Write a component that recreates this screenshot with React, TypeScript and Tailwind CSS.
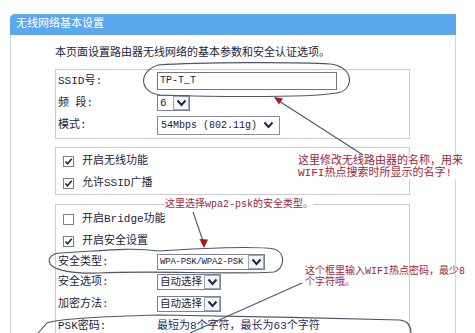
import React from 'react'

const cjk = "font-['Liberation_Mono','Noto_Sans_CJK_SC',monospace]"

const Chevron = () => (
  <svg width="11" height="8" viewBox="0 0 11 8">
    <path d="M1.5 1.5 L5.5 6 L9.5 1.5" fill="none" stroke="#1c2648" strokeWidth="2" />
  </svg>
)

const Select = ({ value, width, text = 'text-[11px]' }: { value: string; width: string; text?: string }) => (
  <div className={`flex h-[16px] items-stretch border border-[#7b8190] bg-white ${width}`}>
    <span className={`flex-1 overflow-hidden whitespace-nowrap pl-[2px] leading-[14px] ${text}`}>{value}</span>
    <span className="flex w-[16px] shrink-0 items-center justify-center border border-[#9aa6bb] bg-[#f4f6fa]">
      <Chevron />
    </span>
  </div>
)

const Check = ({ checked }: { checked?: boolean }) => (
  <span className="flex h-[11px] w-[11px] items-center justify-center border border-[#7a7f88] bg-white">
    {checked && (
      <svg width="9" height="9" viewBox="0 0 9 9">
        <path d="M1.5 4.5 L3.5 6.8 L7.8 1.8" fill="none" stroke="#20283c" strokeWidth="1.6" />
      </svg>
    )}
  </span>
)

const Row = ({ label, h, children }: { label: string; h: string; children: React.ReactNode }) => (
  <div className={`flex items-center pl-[2px] ${h}`}>
    <span className="w-[99px] text-[11px] leading-[14px]">{label}</span>
    {children}
  </div>
)

const CheckRow = ({ label, checked }: { label: string; checked?: boolean }) => (
  <div className="flex h-[22px] items-center gap-[8px] pl-[7px]">
    <Check checked={checked} />
    <span className="text-[11px] leading-[14px]">{label}</span>
  </div>
)

export default function App() {
  return (
    <div className={`relative h-[333px] w-[475px] overflow-hidden bg-white text-[#1d2440] ${cjk}`}>
      {/* page panel */}
      <div className="ml-[10px] w-[446px] pt-[14px]">
        <div className="h-[21px] rounded-tl-[5px] bg-[#5ba8ee] pl-[6px] text-[11px] leading-[21px] text-white">
          无线网络基本设置
        </div>
        <div className="h-[300px] border-x border-[#d3d6da] pl-[44px]">
          <p className="pt-[11px] text-[11px] leading-[14px]">本页面设置路由器无线网络的基本参数和安全认证选项。</p>

          {/* group 1 */}
          <div className="mt-[9px] w-[355px] border border-[#c9ccd1] pb-[1px]">
            <Row label="SSID号:" h="h-[22px]">
              <div className="h-[18px] w-[180px] border border-[#6e7480] pl-[2px] text-[10px] leading-[16px]">TP-T_T</div>
            </Row>
            <Row label="频  段:" h="h-[21px]">
              <Select value="6" width="w-[33px]" />
            </Row>
            <Row label="模式:" h="h-[24px]">
              <div className="flex h-[19px] w-[123px] items-center gap-[6px] border border-[#8a909b] pl-[3px] text-[10px]">
                <span>54Mbps (802.11g)</span>
                <Chevron />
              </div>
            </Row>
          </div>

          {/* group 2 */}
          <div className="mt-[8px] w-[355px] border border-[#c9ccd1] pt-[2px]">
            <CheckRow label="开启无线功能" checked />
            <CheckRow label="允许SSID广播" checked />
          </div>

          {/* group 3 */}
          <div className="mt-[9px] h-[200px] w-[355px] border border-[#c9ccd1] pt-[3px]">
            <CheckRow label="开启Bridge功能" />
            <CheckRow label="开启安全设置" checked />
            <Row label="安全类型:" h="h-[19px]">
              <Select value="WPA-PSK/WPA2-PSK" width="w-[108px]" text="text-[9px] tracking-[-0.2px]" />
            </Row>
            <Row label="安全选项:" h="h-[22px]">
              <Select value="自动选择" width="w-[64px]" text="text-[10.5px]" />
            </Row>
            <Row label="加密方法:" h="h-[22px]">
              <Select value="自动选择" width="w-[64px]" text="text-[10.5px]" />
            </Row>
            <Row label="PSK密码:" h="h-[22px]">
              <span className="text-[11px] leading-[14px] text-[#1f2a5a]">最短为8个字符，最长为63个字符</span>
            </Row>
          </div>
        </div>
      </div>

      {/* hand-drawn notes */}
      <svg className="pointer-events-none absolute left-0 top-0" width="475" height="333" viewBox="0 0 475 333">
        <g fill="none" stroke="#4d5566" strokeWidth="1.1">
          <path d="M158 65 C200 62 300 62 330 64 C352 66 355 86 341 92 C320 98 220 97 160 95 C140 93 137 72 158 65" />
          <path d="M363 155 L279 101" />
          <path d="M193 212 L203 241" />
          <path d="M158 251 C200 248 258 246 274 249 C286 252 285 269 274 272 C230 275 150 270 100 273 C70 274 58 270 52 266 C46 260 50 254 60 253 C100 251 130 247 158 251" />
          <path d="M302 283 L190 333" />
          <path d="M38 333 L47 323 C60 318 120 316 160 315 C220 316 330 318 400 320 C408 321 411 326 411 333" />
        </g>
        <polygon points="274,97 283,98.5 279,104.5" fill="#b3141c" />
        <polygon points="204,248 199.5,239 208,239.5" fill="#b3141c" />
      </svg>

      <div className="absolute left-[298px] top-[155px] whitespace-nowrap text-[11px] leading-[12px] text-[#9c2440]">
        <div className="bg-white">这里修改无线路由器的名称，用来</div>
        <div className="bg-white">WIFI热点搜索时所显示的名字!</div>
      </div>
      <div className="absolute left-[165px] top-[199px] whitespace-nowrap bg-white text-[10px] leading-[12px] text-[#9c2440]">
        这里选择wpa2-psk的安全类型。
      </div>
      <div className="absolute left-[305px] top-[266px] whitespace-nowrap text-[10px] leading-[11px] text-[#9c2440]">
        <div>这个框里输入WIFI热点密码，最少8</div>
        <div>个字符哦。</div>
      </div>
    </div>
  )
}
